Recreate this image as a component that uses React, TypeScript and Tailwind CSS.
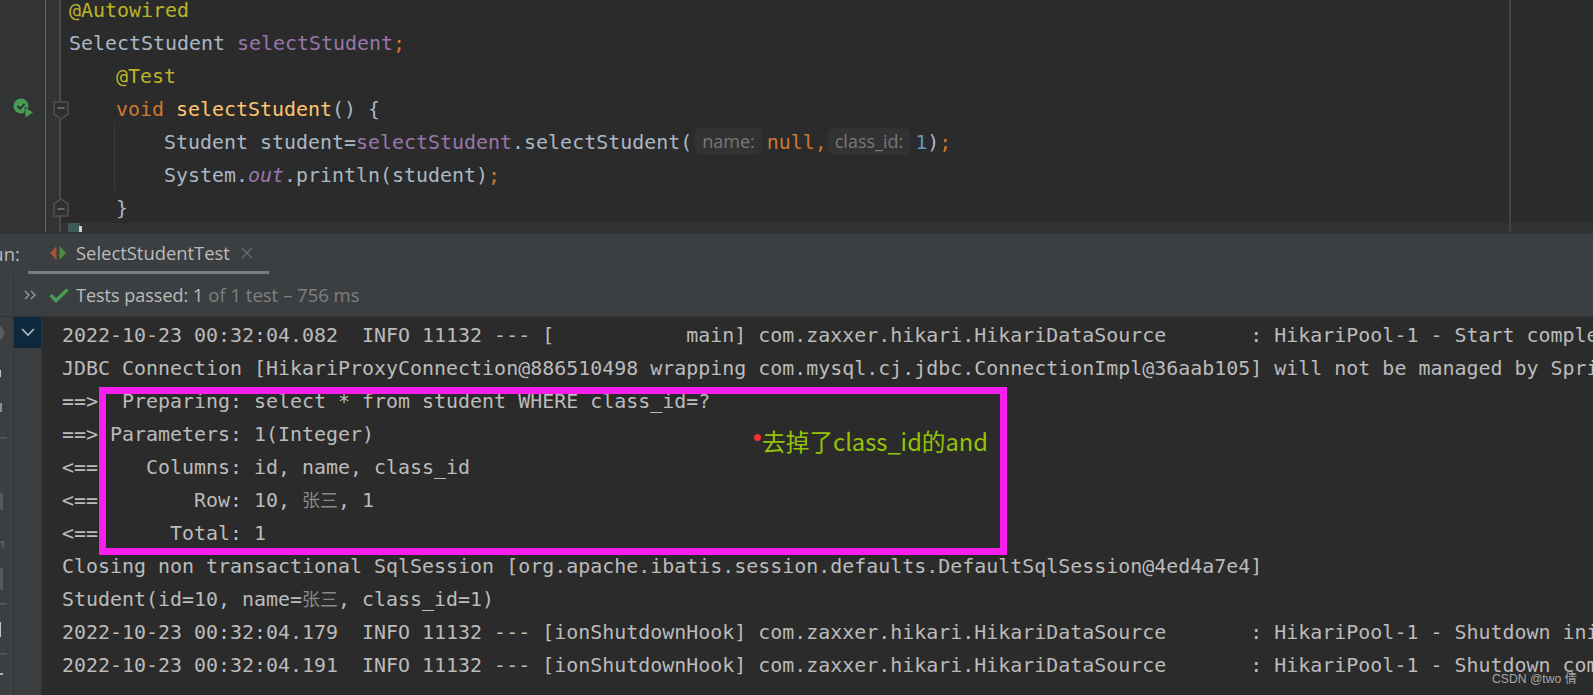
const MONO = "font-['DejaVu_Sans_Mono','Noto_Sans_CJK_SC',monospace]";

function C({ c, children }: { c: string; children: React.ReactNode }) {
  return <span className={c}>{children}</span>;
}

function Hint({ first, children }: { first?: boolean; children: React.ReactNode }) {
  return (
    <span className={`inline-flex h-[27px] items-center rounded-[6px] bg-[#323232] px-[7px] mr-[5px] ${first ? "ml-[3px]" : "ml-[1px]"} font-['Open_Sans',sans-serif] text-[18px] text-[#787878] align-middle relative top-[-2px] tracking-normal`}>
      {children}
    </span>
  );
}

function Row({ children }: { children?: React.ReactNode }) {
  return <div className="h-[33px] leading-[33px] whitespace-pre">{children}</div>;
}

function CodeRow({ indent = 0, children }: { indent?: number; children?: React.ReactNode }) {
  const pad = indent === 0 ? "pl-0" : indent === 1 ? "pl-[47px]" : "pl-[95px]";
  return <div className={`h-[33px] leading-[33px] whitespace-pre ${pad}`}>{children}</div>;
}

function RunIcon() {
  return (
    <svg width="22" height="21" viewBox="0 0 22 21">
      <circle cx="8" cy="8" r="7.5" fill="#499c54" />
      <path d="M4.5 8l2.6 2.6L11.5 6" fill="none" stroke="#2b2b2b" strokeWidth="1.8" />
      <path d="M12 9l8.5 5.5L12 20z" fill="#499c54" stroke="#313335" strokeWidth="0.8" />
    </svg>
  );
}

function FoldTop() {
  return (
    <svg width="16" height="20" viewBox="0 0 16 20">
      <path d="M1 1h14v12l-7 5-7-5z" fill="#2f2f2f" stroke="#505050" strokeWidth="1.5" />
      <path d="M4.5 7h7" stroke="#777" strokeWidth="1.5" />
    </svg>
  );
}

function FoldBottom() {
  return (
    <svg width="16" height="20" viewBox="0 0 16 20">
      <path d="M1 19h14V7L8 2 1 7z" fill="#2f2f2f" stroke="#505050" strokeWidth="1.5" />
      <path d="M4.5 12h7" stroke="#777" strokeWidth="1.5" />
    </svg>
  );
}

function RailIcons() {
  return (
    <svg width="13" height="423" viewBox="0 0 13 423" className="block">
      <rect x="0" y="22" width="1" height="2" fill="#499c54" />
      <circle cx="-5" cy="61" r="9" fill="#5a5c5e" />
      <rect x="0" y="98" width="1" height="7" fill="#c4c4c4" />
      <rect x="0" y="131" width="2" height="9" fill="#8a8c8e" />
      <rect x="0" y="165" width="7" height="1.5" fill="#565859" />
      <rect x="0" y="221" width="3" height="17" fill="#565859" />
      <path d="M0 269h4v9z" fill="#5a5c5e" />
      <rect x="0" y="296" width="3" height="22" fill="#565859" />
      <rect x="0" y="331" width="7" height="1.5" fill="#565859" />
      <rect x="0" y="350" width="1" height="15" fill="#c4c4c4" />
      <rect x="0" y="381" width="7" height="1.5" fill="#565859" />
      <rect x="0" y="401" width="3" height="2" fill="#b0b0b0" />
    </svg>
  );
}

const log = [
  <Row key="0">{"2022-10-23 00:32:04.082  INFO 11132 --- [           main] com.zaxxer.hikari.HikariDataSource       : HikariPool-1 - Start completed."}</Row>,
  <Row key="1">{"JDBC Connection [HikariProxyConnection@886510498 wrapping com.mysql.cj.jdbc.ConnectionImpl@36aab105] will not be managed by Spring"}</Row>,
  <Row key="2">{"==>  Preparing: select * from student WHERE class_id=?"}</Row>,
  <Row key="3">{"==> Parameters: 1(Integer)"}</Row>,
  <Row key="4">{"<==    Columns: id, name, class_id"}</Row>,
  <Row key="5">{"<==        Row: 10, "}<span className="text-[#8a8a8a] text-[18px]">张三</span>{", 1"}</Row>,
  <Row key="6">{"<==      Total: 1"}</Row>,
  <Row key="7">{"Closing non transactional SqlSession [org.apache.ibatis.session.defaults.DefaultSqlSession@4ed4a7e4]"}</Row>,
  <Row key="8">{"Student(id=10, name="}<span className="text-[#8a8a8a] text-[18px]">张三</span>{", class_id=1)"}</Row>,
  <Row key="9">{"2022-10-23 00:32:04.179  INFO 11132 --- [ionShutdownHook] com.zaxxer.hikari.HikariDataSource       : HikariPool-1 - Shutdown initiated..."}</Row>,
  <Row key="10">{"2022-10-23 00:32:04.191  INFO 11132 --- [ionShutdownHook] com.zaxxer.hikari.HikariDataSource       : HikariPool-1 - Shutdown completed."}</Row>,
];

export default function App() {
  return (
    <div className={`relative h-[695px] w-[1593px] overflow-hidden bg-[#2b2b2b] ${MONO} text-[19.95px] text-[#a9b7c6]`}>
      {/* editor */}
      <div className="flex h-[232px] overflow-hidden">
        <div className="relative h-full w-[45px] shrink-0 bg-[#313335]">
          <div className="absolute left-[13px] top-[98px]"><RunIcon /></div>
        </div>
        <div className="h-full w-px shrink-0 bg-[#4f6f68]" />
        <div className="relative z-10 h-full w-[15px] shrink-0 bg-[#313335]">
          <div className="absolute left-[13px] top-0 h-full w-[2px] bg-[#4a4a4a]" />
          <div className="absolute left-[7px] top-[101px]"><FoldTop /></div>
          <div className="absolute left-[7px] top-[197px]"><FoldBottom /></div>
        </div>
        <div className="relative min-w-0 flex-1 pl-[8px]">
          <div className="absolute left-[53px] top-[124px] h-[66px] w-px bg-[#3b3b3b]" />
          <div className="absolute left-0 right-0 top-[223px] h-[9px] bg-[#323232]" />
          <div className="absolute left-[7px] top-[223px] h-[9px] w-[12px] bg-[#3f5a56]" />
          <div className="absolute left-[18px] top-[226px] h-[6px] w-[3px] bg-[#d0d0d0]" />
          <div className="absolute left-[1448px] top-0 h-full w-[2px] bg-[#434343]" />
          <div className="relative -mt-[6px]">
            <CodeRow><C c="text-[#bbb529]">@Autowired</C></CodeRow>
            <CodeRow>SelectStudent <C c="text-[#9876aa]">selectStudent</C><C c="text-[#cc7832]">;</C></CodeRow>
            <CodeRow indent={1}><C c="text-[#bbb529]">@Test</C></CodeRow>
            <CodeRow indent={1}><C c="text-[#cc7832]">void </C><C c="text-[#ffc66d]">selectStudent</C>() {"{"}</CodeRow>
            <CodeRow indent={2}>
              Student student=<C c="text-[#9876aa]">selectStudent</C>.selectStudent(<Hint first>name:</Hint>
              <C c="text-[#cc7832]">null,</C><Hint>class_id:</Hint><C c="text-[#6897bb]">1</C>)<C c="text-[#cc7832]">;</C>
            </CodeRow>
            <CodeRow indent={2}>System.<C c="italic text-[#9876aa]">out</C>.println(student)<C c="text-[#cc7832]">;</C></CodeRow>
            <CodeRow indent={1}>{"}"}</CodeRow>
          </div>
        </div>
      </div>
      <div className="h-[2px] bg-[#323232]" />

      {/* run tool window */}
      <div className="flex h-[40px] items-start bg-[#3c3f41] font-['Open_Sans',sans-serif] text-[18.4px] text-[#bbbbbb]">
        <span className="ml-[-19px] mt-[6px] w-[47px] shrink-0">Run:</span>
        <div className="flex h-[40px] w-[241px] shrink-0 items-center border-b-[3px] border-[#787c85] pl-[21px] pt-[1px]">
          <svg width="18" height="16" viewBox="0 0 18 16" className="mr-[9px] shrink-0">
            <path d="M7.5 1v14L1 8z" fill="#a0562f" />
            <path d="M10.5 1v14L17 8z" fill="#4f8a43" />
          </svg>
          <span>SelectStudentTest</span>
          <svg width="12" height="12" viewBox="0 0 12 12" className="ml-[11px] shrink-0">
            <path d="M1 1l10 10M11 1L1 11" stroke="#6e7072" strokeWidth="1.2" />
          </svg>
        </div>
      </div>
      <div className="flex h-[42px] bg-[#3c3f41]">
        <div className="w-[13px] shrink-0" />
        <div className="w-px shrink-0 bg-[#323436]" />
        <div className="flex min-w-0 flex-1 items-center pl-[10px] font-['Open_Sans',sans-serif] text-[18px]">
          <svg width="12" height="12" viewBox="0 0 12 12" className="mr-[13px] shrink-0">
            <path d="M1 2l4 4-4 4M7 2l4 4-4 4" fill="none" stroke="#a0a0a0" strokeWidth="1.2" />
          </svg>
          <svg width="20" height="15" viewBox="0 0 20 15" className="mr-[7px] shrink-0">
            <path d="M1.5 7l5.5 5.5L18.5 1.5" fill="none" stroke="#499c54" strokeWidth="3.4" />
          </svg>
          <span className="text-[#bbbbbb]">Tests passed: 1</span>
          <span className="ml-[5px] text-[18.5px] text-[#7d7f81]">of 1 test – 756 ms</span>
        </div>
      </div>

      {/* console */}
      <div className="flex h-[379px] border-t border-[#323232]">
        <div className="w-[13px] shrink-0 overflow-hidden bg-[#3c3f41]">
          <div className="-mt-[45px]"><RailIcons /></div>
        </div>
        <div className="w-px shrink-0 bg-[#323436]" />
        <div className="w-[27px] shrink-0 bg-[#3c3f41]">
          <div className="flex h-[31px] items-center justify-center bg-[#0d293e]">
            <svg width="14" height="9" viewBox="0 0 14 9">
              <path d="M1 1l6 6 6-6" fill="none" stroke="#b4bcc4" strokeWidth="1.6" />
            </svg>
          </div>
        </div>
        <div className="w-px shrink-0 bg-[#323232]" />
        <div className="min-w-0 flex-1 overflow-hidden pl-[20px] pt-[2px] text-[#bbbbbb]">{log}</div>
      </div>

      {/* annotation overlay */}
      <div className="absolute left-[99px] top-[387px] h-[168px] w-[908px] border-[7px] border-[#f81fee]" />
      <div className="absolute left-[754px] top-[434px] h-[7px] w-[7px] rounded-full bg-[#f5302e]" />
      <div className="absolute left-[762px] top-[423px] whitespace-nowrap font-['Noto_Sans_CJK_SC',sans-serif] text-[23.7px] leading-[36px] text-[#95c306]">
        去掉了class_id的and
      </div>
      <div className="absolute left-[1492px] top-[669px] whitespace-nowrap font-['Liberation_Sans','Noto_Sans_CJK_SC',sans-serif] text-[12.2px] leading-[20px] text-[#a6a6a6]">
        CSDN @two 倩
      </div>
    </div>
  );
}
